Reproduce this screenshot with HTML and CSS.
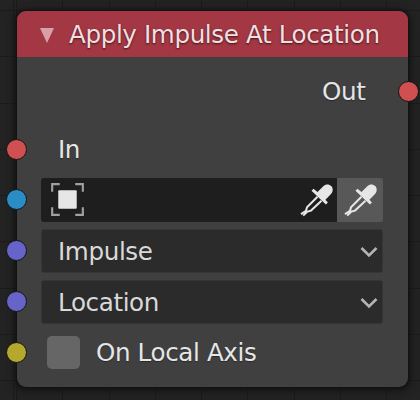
FILE: index.html
```html
<!DOCTYPE html>
<html lang="en">
<head>
<meta charset="utf-8">
<title>Node editor</title>
<link rel="stylesheet" href="styles.css">
</head>
<body>
<svg class="defs" width="0" height="0" aria-hidden="true">
  <symbol id="eyedropper" viewBox="0 0 34 34">
    <path d="M18.500 13.800 8 24.200 7 27.800 2 31.200M22.500 17.800 12 27.600 8.400 28.600 4.200 32.600" fill="none" stroke="#e6e6e6" stroke-width="2"/>
    <path d="m18.500 9 5.800-5.800c2.400-2.300 5.800-2.200 7.900-.1s2 5.600-.2 7.900l-5.600 5.800 2.500 2.700-2 2L12.500 7.700l2-2z" fill="#e6e6e6"/>
  </symbol>
  <symbol id="chevron" viewBox="0 0 18 12">
    <path d="m1.500 2 7.500 7.500L16.500 2" fill="none" stroke="#b4b4b4" stroke-width="2.600"/>
  </symbol>
</svg>
<main class="canvas">
  <section class="node">
    <header class="header"><svg class="collapse" viewBox="0 0 14 15"><path d="M0 0h14L7 15z" fill="#d8a0a6"/></svg><h1 class="title">Apply Impulse At Location</h1></header>
    <div class="row output"><span class="label out">Out</span><i class="socket right red"></i></div>
    <div class="row input"><i class="socket red"></i><span class="label in">In</span></div>
    <div class="row field-row"><i class="socket blue"></i>
      <div class="object-field">
        <svg class="object-icon" viewBox="0 0 34 34"><path d="M1.200 9V1.200H9M25 1.200h7.800V9M32.800 25v7.800H25M9 32.800H1.200V25" fill="none" stroke="#a0a0a0" stroke-width="2.200"/><rect x="7.500" y="7.500" width="19" height="19" rx="1" fill="#e6e6e6"/></svg>
        <svg class="dropper"><use href="#eyedropper"/></svg>
      </div>
      <div class="pick"><svg class="dropper"><use href="#eyedropper"/></svg></div>
    </div>
    <div class="row field-row"><i class="socket violet"></i><div class="select"><span class="value">Impulse</span><svg class="chevron"><use href="#chevron"/></svg></div></div>
    <div class="row field-row"><i class="socket violet"></i><div class="select"><span class="value">Location</span><svg class="chevron"><use href="#chevron"/></svg></div></div>
    <div class="row check-row"><i class="socket yellow"></i><span class="checkbox"></span><span class="label axis">On Local Axis</span></div>
  </section>
</main>
</body>
</html>
```
FILE: styles.css
```css
* { box-sizing: border-box; }
body { margin: 0; background: #232323; font: 24.600px/30px "DejaVu Sans", sans-serif; letter-spacing: -.38px; color: #e6e6e6; overflow: hidden; }
.defs { position: absolute; }
.canvas {
  width: 420px; height: 400px; padding: 10.500px 11.500px 12.500px 16.500px;
  background:
    repeating-linear-gradient(90deg, #1b1b1b 0 1px, transparent 1px 46.300px) 16px 0,
    repeating-linear-gradient(#1b1b1b 0 1px, transparent 1px 46.300px) 0 10px,
    #232323;
}
.node { width: 391.500px; height: 376.500px; border-radius: 9px; background: #404040; box-shadow: 0 0 3px 1px #111, 0 2px 8px 2px #151515; }
.header { height: 46px; display: flex; align-items: center; padding-left: 23.500px; border-radius: 9px 9px 0 0; background: #a33743; }
.collapse { width: 14px; height: 15px; flex: none; margin-top: 4px; }
.title { margin: 2px 0 0 15px; font: inherit; white-space: nowrap; color: #f2dfe0; text-shadow: 0 1px 2px #3b1519; }
.row { position: relative; display: flex; align-items: center; }
.label { text-shadow: 0 1px 1px #2a2a2a; }
.output { height: 70px; justify-content: flex-end; padding-right: 42.500px; }
.input { height: 46px; padding-left: 41.500px; margin-bottom: 5px; }
.field-row { height: 44px; padding-left: 24.500px; margin-bottom: 7px; }
.object-field { width: 296px; height: 44px; display: flex; align-items: center; justify-content: space-between; padding: 0 4px 0 10px; border-radius: 3px 0 0 3px; background: #1e1e1e; }
.object-icon { width: 33px; height: 33px; }
.dropper { width: 34px; height: 34px; }
.pick { width: 46px; height: 44px; display: flex; align-items: center; justify-content: center; border-radius: 0 3px 3px 0; background: #585858; }
.select { width: 342px; height: 44px; display: flex; align-items: center; justify-content: space-between; padding: 0 4px 0 16px; border: 1px solid #363636; border-radius: 3px; background: #2b2b2b; color: #d9d9d9; }
.value { padding-top: 2px; }
.chevron { width: 18px; height: 12px; margin-top: 2px; }
.check-row { height: 43px; padding-left: 30.500px; }
.checkbox { width: 33px; height: 33px; border-radius: 5px; background: #666; }
.axis { margin-left: 16px; padding-top: 1px; }
.socket { position: absolute; left: -10.500px; top: 50%; width: 21px; height: 21px; margin-top: -10.500px; border: 1px solid #151515; border-radius: 50%; }
.right { left: auto; right: -10.500px; }
.red { background: #d04f50; }
.blue { background: #2b8dc5; }
.violet { background: #6764c9; }
.yellow { background: #b4a92d; }
```
